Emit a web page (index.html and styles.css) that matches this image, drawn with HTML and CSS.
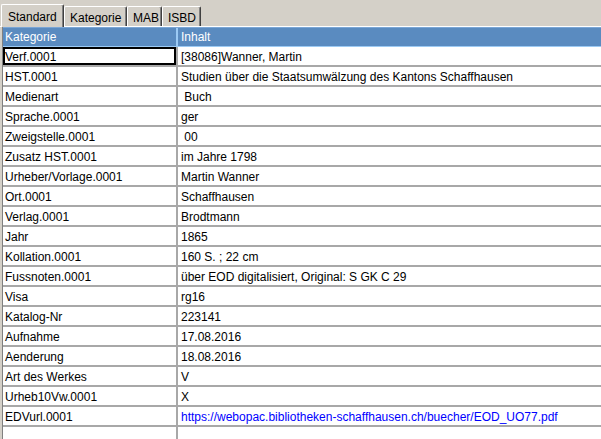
FILE: index.html
```html
<!DOCTYPE html>
<html>
<head>
<meta charset="utf-8">
<link rel="stylesheet" href="styles.css">
</head>
<body>
<div class="tabs">
  <div class="tab active">Standard</div>
  <div class="tab w-kat">Kategorie</div>
  <div class="tab w-mab">MAB</div>
  <div class="tab w-isbd">ISBD</div>
</div>
<div class="grid">
  <div class="row head"><div class="c1">Kategorie</div><div class="c2">Inhalt</div></div>
  <div class="row"><div class="c1 focus">Verf.0001</div><div class="c2">[38086]Wanner, Martin</div></div>
  <div class="row"><div class="c1">HST.0001</div><div class="c2">Studien über die Staatsumwälzung des Kantons Schaffhausen</div></div>
  <div class="row"><div class="c1">Medienart</div><div class="c2">&nbsp;Buch</div></div>
  <div class="row"><div class="c1">Sprache.0001</div><div class="c2">ger</div></div>
  <div class="row"><div class="c1">Zweigstelle.0001</div><div class="c2">&nbsp;00</div></div>
  <div class="row"><div class="c1">Zusatz HST.0001</div><div class="c2">im Jahre 1798</div></div>
  <div class="row"><div class="c1">Urheber/Vorlage.0001</div><div class="c2">Martin Wanner</div></div>
  <div class="row"><div class="c1">Ort.0001</div><div class="c2">Schaffhausen</div></div>
  <div class="row"><div class="c1">Verlag.0001</div><div class="c2">Brodtmann</div></div>
  <div class="row"><div class="c1">Jahr</div><div class="c2">1865</div></div>
  <div class="row"><div class="c1">Kollation.0001</div><div class="c2">160 S. ; 22 cm</div></div>
  <div class="row"><div class="c1">Fussnoten.0001</div><div class="c2">über EOD digitalisiert, Original: S GK C 29</div></div>
  <div class="row"><div class="c1">Visa</div><div class="c2">rg16</div></div>
  <div class="row"><div class="c1">Katalog-Nr</div><div class="c2">223141</div></div>
  <div class="row"><div class="c1">Aufnahme</div><div class="c2">17.08.2016</div></div>
  <div class="row"><div class="c1">Aenderung</div><div class="c2">18.08.2016</div></div>
  <div class="row"><div class="c1">Art des Werkes</div><div class="c2">V</div></div>
  <div class="row"><div class="c1">Urheb10Vw.0001</div><div class="c2">X</div></div>
  <div class="row"><div class="c1">EDVurl.0001</div><div class="c2 link">https://webopac.bibliotheken-schaffhausen.ch/buecher/EOD_UO77.pdf</div></div>
  <div class="row"><div class="c1"></div><div class="c2"></div></div>
</div>
</body>
</html>
```
FILE: styles.css
```css
html, body {
  margin: 0;
  padding: 0;
  height: 100%;
  overflow: hidden;
}
body {
  display: flex;
  flex-direction: column;
  background: #d4d0c8;
  font-family: "Liberation Sans", Arial, sans-serif;
  font-size: 12px;
  color: #000;
}
.tabs {
  display: flex;
  align-items: flex-end;
  flex: 0 0 27px;
  padding-left: 1px;
  box-sizing: border-box;
  border-bottom: 1px solid #ffffff;
}
.tab {
  box-sizing: border-box;
  height: 20px;
  padding: 4px 0 0 5px;
  line-height: 14px;
  border-top: 1px solid #ffffff;
  border-left: 1px solid #ffffff;
  border-right: 1px solid #404040;
  box-shadow: inset -1px 0 0 #808080;
  border-radius: 2px 2px 0 0;
  white-space: nowrap;
  overflow: hidden;
}
.tab.active {
  height: 23px;
  width: 63px;
  padding: 5px 0 0 6px;
  margin-bottom: -1px;
  background: #d4d0c8;
  position: relative;
}
.w-kat { width: 63px; }
.w-mab { width: 35px; }
.w-isbd { width: 39px; }
.grid {
  flex: 1;
  margin-left: 2px;
  border-left: 1px solid #808080;
  background: #ffffff;
  overflow: hidden;
}
.row {
  display: grid;
  grid-template-columns: 175px 1fr;
  height: 20px;
  box-sizing: border-box;
  border-bottom: 2px solid #a8a8a8;
  line-height: 20px;
  white-space: nowrap;
}
.c1 {
  border-right: 2px solid #a8a8a8;
  padding-left: 2px;
  overflow: hidden;
}
.c2 {
  padding-left: 3px;
  overflow: hidden;
}
.head {
  background: #5a8bc0;
  color: #ffffff;
  border-top: 1px solid #7aa6d6;
  border-bottom: 1px solid #9ccaf4;
  line-height: 18px;
}
.head .c1 {
  border-right: 2px solid #9ccaf4;
}
.focus {
  box-shadow: inset 0 0 0 2px #000000;
}
.link {
  color: #0000ff;
}
```
